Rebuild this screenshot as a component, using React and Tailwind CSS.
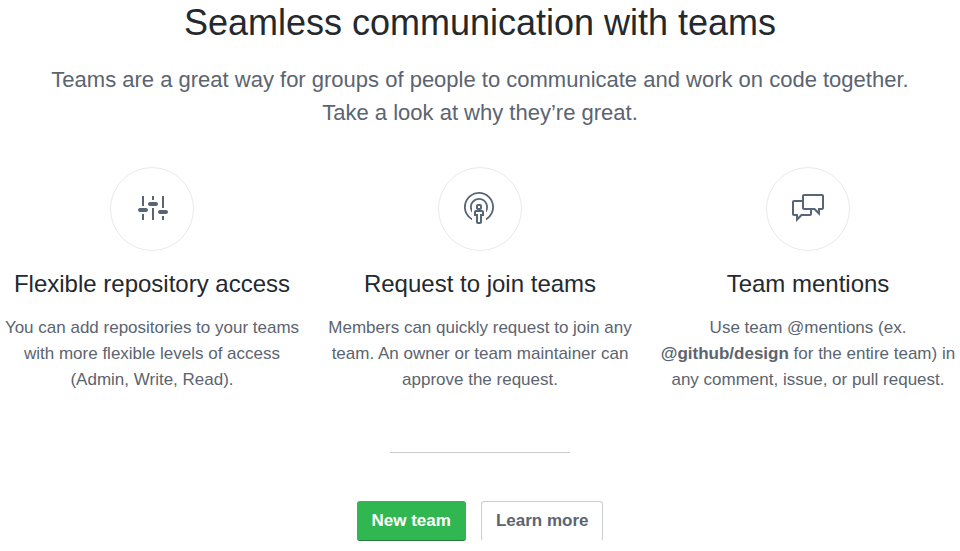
import React from "react";

function SettingsIcon() {
  return (
    <svg width="32" height="32" viewBox="0 0 16 16" fill="currentColor" aria-hidden="true">
      <path d="M4 7H3V2h1v5zm-1 7h1v-3H3v3zm5 0h1V8H8v6zm5 0h1v-2h-1v2zm1-12h-1v6h1V2zM9 2H8v2h1V2zM5 8H2c-.55 0-1 .45-1 1s.45 1 1 1h3c.55 0 1-.45 1-1s-.45-1-1-1zm5-3H7c-.55 0-1 .45-1 1s.45 1 1 1h3c.55 0 1-.45 1-1s-.45-1-1-1zm5 4h-3c-.55 0-1 .45-1 1s.45 1 1 1h3c.55 0 1-.45 1-1s-.45-1-1-1z" />
    </svg>
  );
}

function BroadcastIcon() {
  return (
    <svg width="32" height="32" viewBox="0 0 16 16" fill="currentColor" aria-hidden="true">
      <path d="M9 9H8c.55 0 1-.45 1-1V7c0-.55-.45-1-1-1H7c-.55 0-1 .45-1 1v1c0 .55.45 1 1 1H6c-.55 0-1 .45-1 1v2h1v3c0 .55.45 1 1 1h1c.55 0 1-.45 1-1v-3h1v-2c0-.55-.45-1-1-1zM7 7h1v1H7V7zm2 4H8v4H7v-4H6v-1h3v1zm2.09-3.5c0-1.98-1.61-3.59-3.59-3.59A3.593 3.593 0 0 0 4 8.31v1.98c-.61-.77-1-1.73-1-2.8 0-2.48 2.02-4.5 4.5-4.5S12 5.01 12 7.49c0 1.06-.39 2.03-1 2.8V8.31c.06-.27.09-.53.09-.81zm3.91 0c0 2.88-1.63 5.38-4 6.63v-1.05a6.553 6.553 0 0 0 3.09-5.58A6.59 6.59 0 0 0 7.5.91 6.59 6.59 0 0 0 .91 7.5c0 2.36 1.23 4.42 3.09 5.58v1.05A7.497 7.497 0 0 1 7.5 0C11.64 0 15 3.36 15 7.5z" />
    </svg>
  );
}

function DiscussionIcon() {
  return (
    <svg width="32" height="32" viewBox="0 0 16 16" fill="currentColor" aria-hidden="true">
      <path d="M15 1H6c-.55 0-1 .45-1 1v2H1c-.55 0-1 .45-1 1v6c0 .55.45 1 1 1h1v3l3-3h4c.55 0 1-.45 1-1V9h1l3 3V9h1c.55 0 1-.45 1-1V2c0-.55-.45-1-1-1zM9 11H4.5L3 12.5V11H1V5h4v3c0 .55.45 1 1 1h3v2zm6-3h-2v1.5L11.500 8H6V2h9v6z" />
    </svg>
  );
}

function Feature({ icon, title, children }) {
  return (
    <section className="min-w-0 text-center">
      <div className="mx-auto flex size-[84px] items-center justify-center rounded-full border border-[#eaeae6] pb-[3px] text-[#586577]">
        {icon}
      </div>
      <h2 className="mt-4 text-2xl leading-[34px] text-[#24292e]">{title}</h2>
      <p className="mt-3.5 text-[17px] leading-[26px]">{children}</p>
    </section>
  );
}

export default function App() {
  return (
    <main className="bg-white pb-2.5 font-['Liberation_Sans',Arial,sans-serif] text-[#5b6470]">
      <header className="text-center">
        <h1 className="text-4xl leading-[46px] text-[#24292e]">Seamless communication with teams</h1>
        <p className="mx-auto mt-[17px] max-w-[860px] text-[22px] leading-[33px]">
          Teams are a great way for groups of people to communicate and work on code together. Take a look at why they’re great.
        </p>
      </header>
      <div className="mt-[38px] grid grid-cols-3 gap-6">
        <Feature icon={<SettingsIcon />} title="Flexible repository access">
          You can add repositories to your teams with more flexible levels of access (Admin, Write, Read).
        </Feature>
        <Feature icon={<BroadcastIcon />} title="Request to join teams">
          Members can quickly request to join any team. An owner or team maintainer can approve the request.
        </Feature>
        <Feature icon={<DiscussionIcon />} title="Team mentions">
          Use team @mentions (ex. <strong>@github/design</strong> for the entire team) in any comment, issue, or pull request.
        </Feature>
      </div>
      <hr className="mx-auto mt-[59px] w-[180px] border-[#c8cbcf]" />
      <div className="mt-12 flex justify-center gap-[15px] text-[17px] font-bold">
        <button type="button" className="h-10 rounded-[3px] border-b border-[#287a3c] bg-[#31b751] px-[15px] text-white">New team</button>
        <button type="button" className="h-10 rounded-[3px] border border-[#c8cdd2] border-b-transparent bg-white px-3.5">Learn more</button>
      </div>
    </main>
  );
}
